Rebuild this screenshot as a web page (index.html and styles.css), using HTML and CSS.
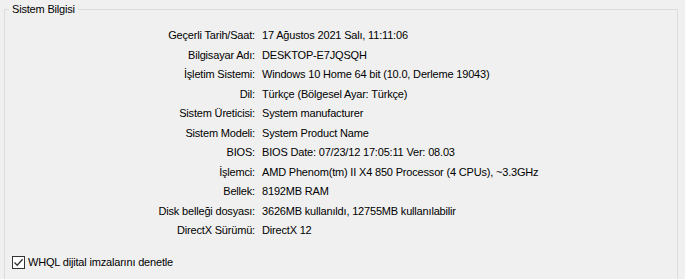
FILE: index.html
```html
<!DOCTYPE html>
<html lang="tr">
<head>
    <meta charset="UTF-8">
    <title>Sistem Bilgisi</title>
    <link rel="stylesheet" href="styles.css">
</head>
<body>
    <fieldset class="group">
        <legend>Sistem Bilgisi</legend>

        <div class="info">
            <span class="label">Geçerli Tarih/Saat:</span><span>17 Ağustos 2021 Salı, 11:11:06</span>
            <span class="label">Bilgisayar Adı:</span><span>DESKTOP-E7JQSQH</span>
            <span class="label">İşletim Sistemi:</span><span>Windows 10 Home 64 bit (10.0, Derleme 19043)</span>
            <span class="label">Dil:</span><span>Türkçe (Bölgesel Ayar: Türkçe)</span>
            <span class="label">Sistem Üreticisi:</span><span>System manufacturer</span>
            <span class="label">Sistem Modeli:</span><span>System Product Name</span>
            <span class="label">BIOS:</span><span>BIOS Date: 07/23/12 17:05:11 Ver: 08.03</span>
            <span class="label">İşlemci:</span><span>AMD Phenom(tm) II X4 850 Processor (4 CPUs), ~3.3GHz</span>
            <span class="label">Bellek:</span><span>8192MB RAM</span>
            <span class="label">Disk belleği dosyası:</span><span>3626MB kullanıldı, 12755MB kullanılabilir</span>
            <span class="label">DirectX Sürümü:</span><span>DirectX 12</span>
        </div>

        <label class="check">
            <span class="box">
                <svg width="11" height="11" viewBox="0 0 11 11">
                    <path d="M1.5 5.5 L4.2 8.3 L9.6 2.2" fill="none" stroke="#333" stroke-width="1.3"/>
                </svg>
            </span>
            WHQL dijital imzalarını denetle
        </label>
    </fieldset>
</body>
</html>
```

FILE: styles.css
```css
body {
    margin: 0;
    background-color: #f0f0f0;
    font-family: "Liberation Sans", Arial, sans-serif;
    font-size: 11px;
    letter-spacing: -0.18px;
    color: #000;
    overflow: hidden;
}
.group {
    margin: 2px 0 0 4px;
    width: 674px;
    height: 277px;
    box-sizing: border-box;
    border: 1px solid #dcdcdc;
    border-bottom: none;
    padding: 0;
}
.group legend {
    margin-left: 4px;
    padding: 0 3px;
    line-height: 14px;
}
.info {
    display: grid;
    grid-template-columns: 250px auto;
    column-gap: 7px;
    line-height: 19.5px;
    margin-top: 10px;
}
.info .label {
    text-align: right;
}
.check {
    display: flex;
    align-items: center;
    gap: 3px;
    margin: 15px 0 0 7px;
}
.check .box {
    width: 11px;
    height: 11px;
    border: 1px solid #333;
    background-color: #fff;
    display: flex;
}
```
